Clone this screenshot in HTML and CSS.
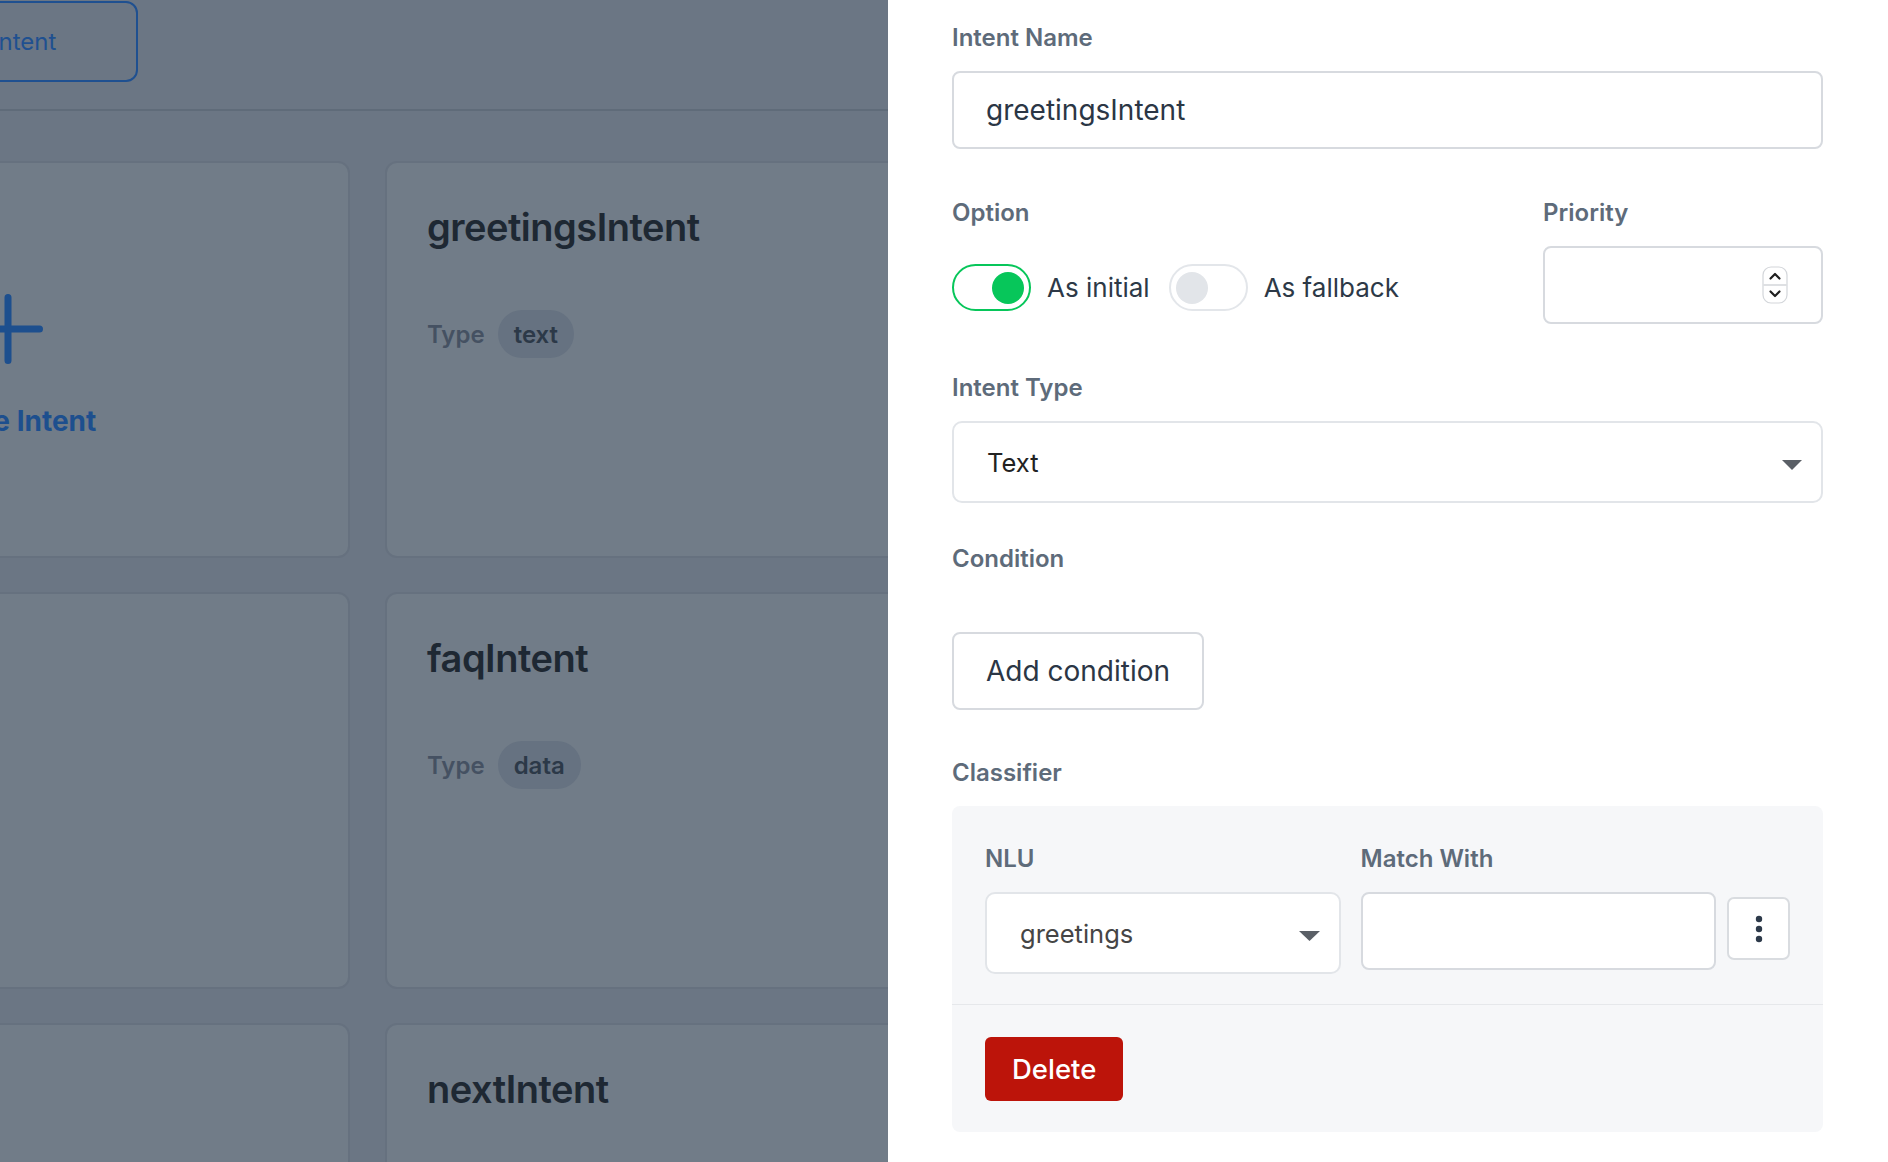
FILE: index.html
```html
<!DOCTYPE html>
<html lang="en">
<head>
<meta charset="utf-8">
<title>Intents</title>
<link rel="stylesheet" href="styles.css">
</head>
<body>
<div class="page">
  <header class="page-header">
    <button class="btn-outline" type="button">New Intent</button>
  </header>
  <main class="card-grid">
    <div class="card card-create">
      <svg class="plus" width="70" height="70" viewBox="0 0 70 70"><path d="M35 3.5V66.5M3.5 35H66.5"/></svg>
      <span class="create-label">Create Intent</span>
    </div>
    <div class="card">
      <h2 class="card-title">greetingsIntent</h2>
      <div class="card-meta"><span class="meta-label">Type</span><span class="pill">text</span></div>
    </div>
    <div class="card">
      <h2 class="card-title">help</h2>
      <div class="card-meta"><span class="meta-label">Type</span></div>
    </div>
    <div class="card">
      <h2 class="card-title">faqIntent</h2>
      <div class="card-meta"><span class="meta-label">Type</span><span class="pill">data</span></div>
    </div>
    <div class="card">
      <h2 class="card-title">bye</h2>
    </div>
    <div class="card">
      <h2 class="card-title">nextIntent</h2>
    </div>
  </main>
</div>

<aside class="drawer">
  <div class="field field-name">
    <label class="field-label" for="intent-name">Intent Name</label>
    <input class="text-input" id="intent-name" type="text" value="greetingsIntent">
  </div>

  <div class="field field-row">
    <div class="field-col">
      <span class="field-label">Option</span>
      <div class="toggles">
        <label class="toggle-item"><span class="switch on"><span class="knob"></span></span>As initial</label>
        <label class="toggle-item"><span class="switch"><span class="knob"></span></span>As fallback</label>
      </div>
    </div>
    <div class="field-col">
      <label class="field-label" for="priority">Priority</label>
      <div class="number-field">
        <input id="priority" type="number">
        <svg class="spinner" width="26" height="38" viewBox="0 0 26 38">
          <rect x="1" y="1" width="24" height="36" rx="8" fill="#fff" stroke="#d3d6da" stroke-width="1.2"/>
          <line x1="1.5" y1="19" x2="24.5" y2="19" stroke="#d3d6da" stroke-width="1.5"/>
          <path d="M8.5 12.5L13 8L17.5 12.5" fill="none" stroke="#1f1f1f" stroke-width="2.2" stroke-linecap="round" stroke-linejoin="round"/>
          <path d="M8.5 25.5L13 30L17.5 25.5" fill="none" stroke="#1f1f1f" stroke-width="2.2" stroke-linecap="round" stroke-linejoin="round"/>
        </svg>
      </div>
    </div>
  </div>

  <div class="field field-type">
    <span class="field-label">Intent Type</span>
    <div class="select select-dark">
      <span>Text</span>
      <svg class="caret" width="20" height="10" viewBox="0 0 20 10"><path d="M0 0H20L10 10Z"/></svg>
    </div>
  </div>

  <div class="field field-condition">
    <span class="field-label">Condition</span>
    <button class="btn-secondary" type="button">Add condition</button>
  </div>

  <div class="field field-classifier">
    <span class="field-label">Classifier</span>
    <div class="classifier">
      <div class="classifier-body">
        <span class="field-label">NLU</span>
        <span class="field-label">Match With</span>
        <span></span>
        <div class="select select-muted">
          <span>greetings</span>
          <svg class="caret" width="21" height="10" viewBox="0 0 21 10"><path d="M0 0H21L10.5 10Z"/></svg>
        </div>
        <input class="text-input match-input" type="text" aria-label="Match With">
        <button class="kebab" type="button" aria-label="More">
          <svg width="8" height="28" viewBox="0 0 8 28"><circle cx="4" cy="4" r="3.2"/><circle cx="4" cy="14" r="3.2"/><circle cx="4" cy="24" r="3.2"/></svg>
        </button>
      </div>
      <div class="classifier-footer">
        <button class="btn-danger" type="button">Delete</button>
      </div>
    </div>
  </div>
</aside>
</body>
</html>
```

FILE: styles.css
```css
* { box-sizing: border-box; }

html, body {
  margin: 0;
  height: 100%;
}

body {
  font-family: Inter, "Noto Sans", "Liberation Sans", sans-serif;
  background: #6b7684;
  overflow: hidden;
}

/* ---------- dimmed page behind the drawer ---------- */
.page {
  margin-left: -335px;
  width: 1900px;
  height: 100vh;
  overflow: hidden;
}

.page-header {
  height: 111px;
  border-bottom: 2px solid #5f6b79;
  padding: 1px 0 0 239px;
  display: flex;
  align-items: flex-start;
}

.btn-outline {
  height: 81px;
  padding: 0 80px 0 28px;
  border: 2px solid #1f5090;
  border-radius: 12px;
  background: transparent;
  color: #1f5090;
  font-family: inherit;
  font-size: 24px;
  font-weight: 400;
}

.card-grid {
  display: grid;
  grid-template-columns: 685px 685px;
  grid-auto-rows: 397px;
  gap: 34px 35px;
  margin-top: 50px;
}

.card {
  border: 2px solid #66717f;
  border-radius: 12px;
  background: #717c88;
  padding: 41px 40px;
}

.card-title {
  margin: 0;
  font-size: 38px;
  line-height: 46px;
  font-weight: 600;
  color: #1e2833;
  letter-spacing: -0.5px;
}

.card-meta {
  margin-top: 60px;
  display: flex;
  align-items: center;
  gap: 13px;
}

.meta-label {
  font-size: 24px;
  font-weight: 600;
  color: #455162;
}

.pill {
  height: 48px;
  padding: 0 16px;
  border-radius: 24px;
  background: #667281;
  color: #2c3948;
  font-size: 24px;
  font-weight: 600;
  display: flex;
  align-items: center;
}

.card-create {
  display: flex;
  flex-direction: column;
  align-items: center;
  justify-content: center;
  padding: 12px 0 0;
}

.plus path {
  fill: none;
  stroke: #1d4f8e;
  stroke-width: 7;
  stroke-linecap: round;
}

.create-label {
  margin-top: 40px;
  font-size: 28px;
  line-height: 34px;
  font-weight: 700;
  color: #1d4f8e;
}

/* ---------- drawer ---------- */
.drawer {
  position: fixed;
  top: 0;
  right: 0;
  bottom: 0;
  width: 1000px;
  background: #ffffff;
  padding: 23px 65px 0 64px;
}

.field-label {
  display: block;
  font-size: 24px;
  line-height: 30px;
  font-weight: 600;
  color: #5e6b7a;
  margin-bottom: 18px;
}

.field-name { margin-bottom: 49px; }
.field-row { margin-bottom: 49px; }
.field-type { margin-bottom: 41px; }
.field-condition { margin-bottom: 48px; }

.text-input {
  display: block;
  width: 100%;
  height: 78px;
  border: 2px solid #d7dadf;
  border-radius: 8px;
  padding: 0 32px;
  background: #fff;
  font-family: inherit;
  font-size: 28px;
  color: #2b3645;
  outline: none;
}

.field-row {
  display: grid;
  grid-template-columns: 1fr 280px;
}

.toggles {
  display: flex;
  align-items: center;
  gap: 19px;
  padding-top: 18px;
}

.toggle-item {
  display: flex;
  align-items: center;
  gap: 16px;
  font-size: 26px;
  color: #2d3947;
}

.switch {
  width: 79px;
  height: 47px;
  border: 2px solid #e3e6ea;
  border-radius: 24px;
  padding: 0 5.5px;
  display: flex;
  align-items: center;
  background: #fff;
}

.knob {
  width: 32px;
  height: 32px;
  border-radius: 50%;
  background: #e2e5e9;
}

.switch.on {
  border-color: #07c65a;
  justify-content: flex-end;
}

.switch.on .knob { background: #07c65a; }

.number-field {
  height: 78px;
  border: 2px solid #d7dadf;
  border-radius: 8px;
  padding: 0 33px 0 32px;
  display: flex;
  align-items: center;
}

.number-field input {
  flex: 1;
  min-width: 0;
  border: none;
  outline: none;
  font-family: inherit;
  font-size: 28px;
  color: #2b3645;
  background: transparent;
  -moz-appearance: textfield;
}

.number-field input::-webkit-inner-spin-button,
.number-field input::-webkit-outer-spin-button {
  -webkit-appearance: none;
  margin: 0;
}

.spinner { flex: none; }

.select {
  height: 82px;
  border: 2px solid #e2e5e9;
  border-radius: 10px;
  padding: 0 19px 0 33px;
  display: flex;
  align-items: center;
  justify-content: space-between;
  background: #fff;
  font-size: 25.5px;
}

.select-dark { color: #222222; }
.select-muted { color: #454545; }

.caret {
  margin-top: 5px;
  fill: #5a5f66;
}

.btn-secondary {
  height: 78px;
  padding: 0 32px;
  border: 2px solid #d7dadf;
  border-radius: 8px;
  background: #fff;
  font-family: inherit;
  font-size: 28px;
  color: #2b3645;
  margin-top: 40px;
}

.classifier {
  background: #f6f7f9;
  border-radius: 8px;
}

.classifier-body {
  display: grid;
  grid-template-columns: 1fr 1fr 54px;
  column-gap: 20px;
  padding: 38px 33px 30px;
  align-items: start;
}

.kebab {
  width: 63px;
  height: 63px;
  margin: 5px 0 0 -9px;
  border: 2px solid #d9dce0;
  border-radius: 7px;
  background: #fff;
  display: flex;
  align-items: center;
  justify-content: center;
  padding: 0;
}

.kebab svg { fill: #2d3a4a; }

.classifier-footer {
  border-top: 1px solid #e6e8eb;
  padding: 32px 33px 31px;
}

.btn-danger {
  height: 64px;
  padding: 0 27px;
  border: none;
  border-radius: 6px;
  background: #bc140a;
  color: #fff;
  font-family: inherit;
  font-size: 27.5px;
  font-weight: 500;
}
```
